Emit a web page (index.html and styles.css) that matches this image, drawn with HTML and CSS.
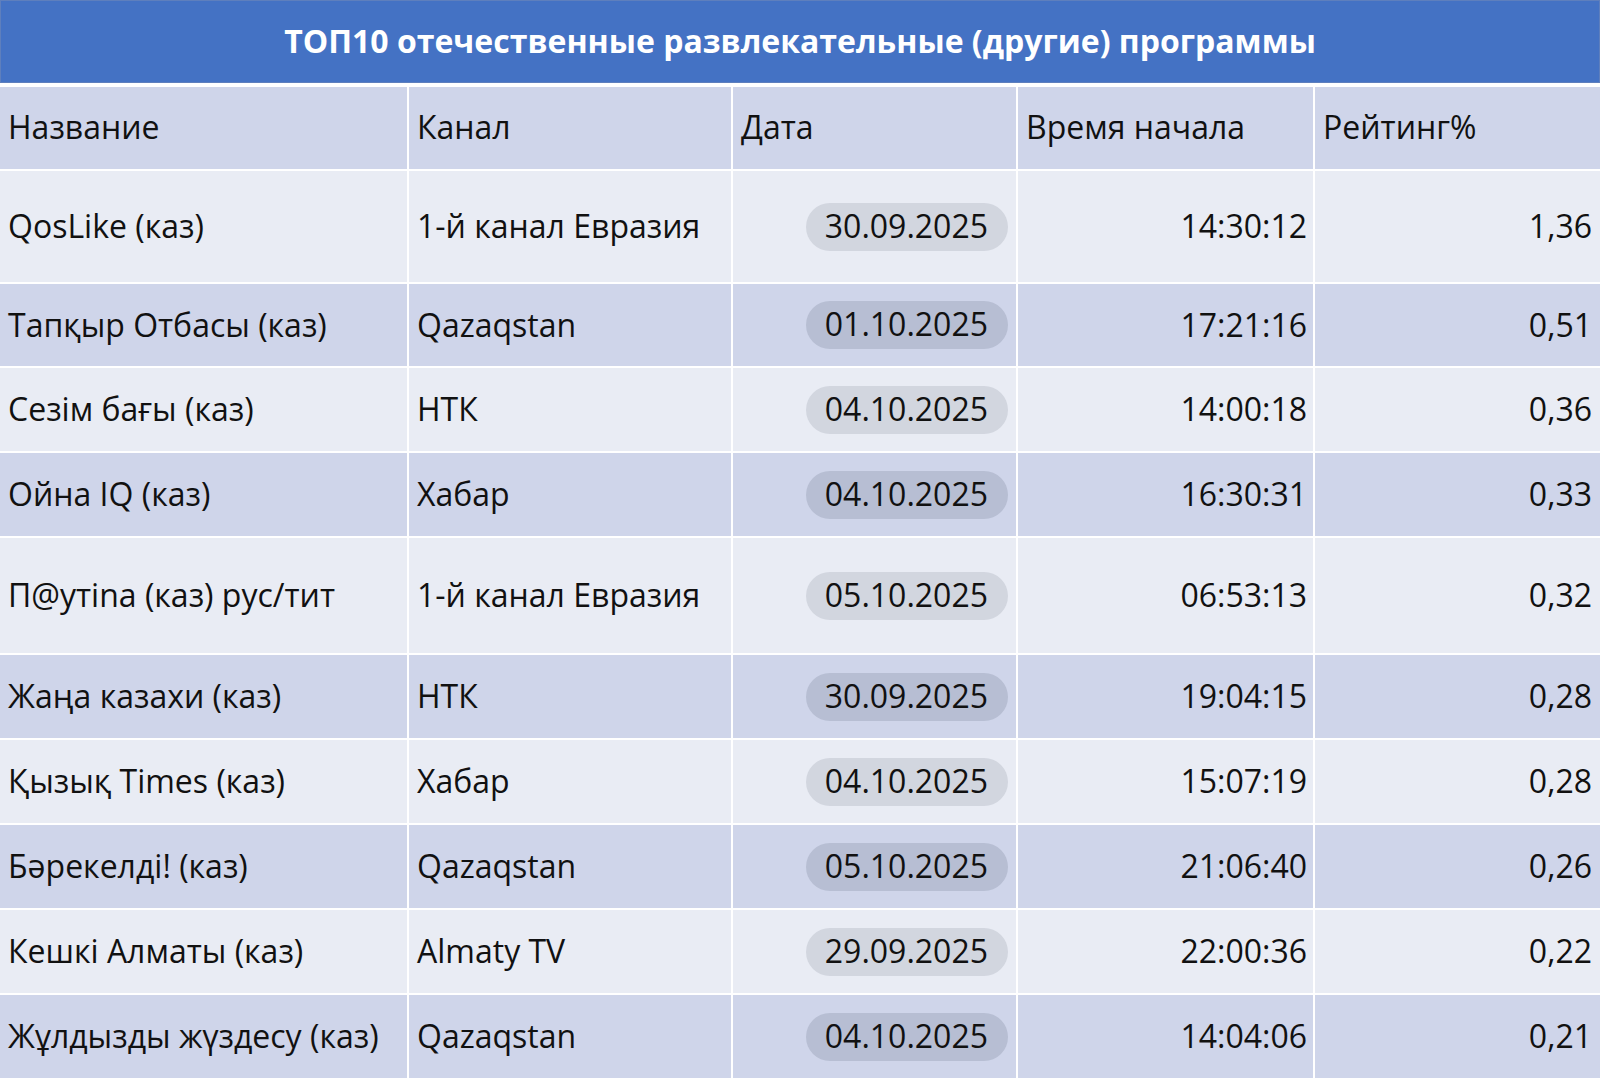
FILE: index.html
```html
<!DOCTYPE html>
<html lang="ru">
<head>
<meta charset="utf-8">
<title>ТОП10</title>
<link rel="stylesheet" href="styles.css">
</head>
<body>
<div class="page">
  <div class="title">ТОП10 отечественные развлекательные (другие) программы</div>
  <div class="table">
    <div class="row head">
      <div class="cell">Название</div>
      <div class="cell">Канал</div>
      <div class="cell">Дата</div>
      <div class="cell">Время начала</div>
      <div class="cell">Рейтинг%</div>
    </div>
    <div class="row light tall-a">
      <div class="cell">QosLike (каз)</div>
      <div class="cell">1-й канал Евразия</div>
      <div class="cell num"><span class="pill">30.09.2025</span></div>
      <div class="cell num">14:30:12</div>
      <div class="cell num">1,36</div>
    </div>
    <div class="row dark short">
      <div class="cell">Тапқыр Отбасы (каз)</div>
      <div class="cell">Qazaqstan</div>
      <div class="cell num"><span class="pill">01.10.2025</span></div>
      <div class="cell num">17:21:16</div>
      <div class="cell num">0,51</div>
    </div>
    <div class="row light">
      <div class="cell">Сезім бағы (каз)</div>
      <div class="cell">НТК</div>
      <div class="cell num"><span class="pill">04.10.2025</span></div>
      <div class="cell num">14:00:18</div>
      <div class="cell num">0,36</div>
    </div>
    <div class="row dark">
      <div class="cell">Ойна IQ (каз)</div>
      <div class="cell">Хабар</div>
      <div class="cell num"><span class="pill">04.10.2025</span></div>
      <div class="cell num">16:30:31</div>
      <div class="cell num">0,33</div>
    </div>
    <div class="row light tall-b">
      <div class="cell">П@утina (каз) рус/тит</div>
      <div class="cell">1-й канал Евразия</div>
      <div class="cell num"><span class="pill">05.10.2025</span></div>
      <div class="cell num">06:53:13</div>
      <div class="cell num">0,32</div>
    </div>
    <div class="row dark">
      <div class="cell">Жаңа казахи (каз)</div>
      <div class="cell">НТК</div>
      <div class="cell num"><span class="pill">30.09.2025</span></div>
      <div class="cell num">19:04:15</div>
      <div class="cell num">0,28</div>
    </div>
    <div class="row light">
      <div class="cell">Қызық Times (каз)</div>
      <div class="cell">Хабар</div>
      <div class="cell num"><span class="pill">04.10.2025</span></div>
      <div class="cell num">15:07:19</div>
      <div class="cell num">0,28</div>
    </div>
    <div class="row dark">
      <div class="cell">Бәрекелді! (каз)</div>
      <div class="cell">Qazaqstan</div>
      <div class="cell num"><span class="pill">05.10.2025</span></div>
      <div class="cell num">21:06:40</div>
      <div class="cell num">0,26</div>
    </div>
    <div class="row light">
      <div class="cell">Кешкі Алматы (каз)</div>
      <div class="cell">Almaty TV</div>
      <div class="cell num"><span class="pill">29.09.2025</span></div>
      <div class="cell num">22:00:36</div>
      <div class="cell num">0,22</div>
    </div>
    <div class="row dark">
      <div class="cell">Жұлдызды жүздесу (каз)</div>
      <div class="cell">Qazaqstan</div>
      <div class="cell num"><span class="pill">04.10.2025</span></div>
      <div class="cell num">14:04:06</div>
      <div class="cell num">0,21</div>
    </div>
  </div>
</div>
</body>
</html>
```

FILE: styles.css
```css
* { box-sizing: border-box; }
html, body {
  margin: 0;
  padding: 0;
  background: #ffffff;
}
body {
  font-family: "Open Sans", "Noto Sans", "DejaVu Sans", sans-serif;
  color: #111111;
  width: 1600px;
  height: 1080px;
  overflow: hidden;
}
.page {
  display: flex;
  flex-direction: column;
  gap: 4px;
}
.title {
  height: 83px;
  background: #4472c4;
  border: 1px solid #5e7fbd;
  color: #ffffff;
  font-weight: 700;
  font-size: 32px;
  display: flex;
  align-items: center;
  justify-content: center;
  padding-bottom: 2px;
}
.table {
  display: flex;
  flex-direction: column;
  gap: 2px;
  background: #ffffff;
}
.row {
  display: grid;
  grid-template-columns: 407px 322px 283px 295px 1fr;
  column-gap: 2px;
  height: 83px;
}
.row.head { height: 82px; }
.row.short { height: 82px; }
.row.tall-a { height: 111px; }
.row.tall-b { height: 115px; }
.cell {
  display: flex;
  align-items: center;
  padding: 0 8px 2px 8px;
  font-size: 32px;
  white-space: nowrap;
}
.head .cell { padding-bottom: 4px; background: #cfd5ea; }
.light .cell { background: #e9ecf4; }
.dark .cell { background: #cfd5ea; }
.cell.num { justify-content: flex-end; }
.cell.num:nth-child(4) { padding-right: 6px; }
.pill {
  display: inline-block;
  height: 48px;
  line-height: 46px;
  padding: 0 20px 0 19px;
  border-radius: 24px;
  margin-top: 2px;
}
.light .pill { background: #d2d6df; }
.dark .pill { background: #b7bed3; }
```
